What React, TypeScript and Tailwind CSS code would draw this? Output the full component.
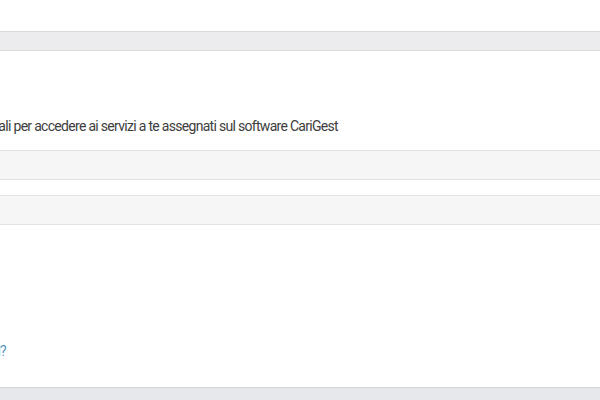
export default function App() {
  return (
    <div className="w-[600px] h-[400px] overflow-hidden bg-[#e6e8eb] flex flex-col font-['Roboto',sans-serif]">
      {/* Header */}
      <div className="h-[31px] bg-white shrink-0" />
      <div className="h-[20px] shrink-0 bg-[#ececee] border-y border-[#dadada]" />

      {/* Card di login */}
      <div className="h-[336px] shrink-0 bg-white flex flex-col pt-[66px] shadow-[0_1px_1px_rgba(0,0,0,0.08)]">
        <div className="w-[338px] flex justify-end">
          <p className="shrink-0 whitespace-nowrap text-[14px] leading-[18px] tracking-[-0.7px] text-[#3d3d3d]">
            Inserisci le tue credenziali per accedere ai servizi a te assegnati sul software CariGest
          </p>
        </div>

        <div className="mt-[15px] flex flex-col gap-[15px]">
          <input
            type="text"
            className="h-[30px] w-full bg-[#f6f6f6] border-y border-[#e3e3e3] outline-none"
          />
          <input
            type="password"
            className="h-[30px] w-full bg-[#f6f6f6] border-y border-[#e3e3e3] outline-none"
          />
        </div>

        <div className="mt-[117px] w-[6px] flex justify-end">
          <a className="shrink-0 whitespace-nowrap text-[14px] leading-[18px] tracking-[-0.7px] text-[#5796c4]">
            Hai dimenticato la password?
          </a>
        </div>
      </div>
    </div>
  );
}
